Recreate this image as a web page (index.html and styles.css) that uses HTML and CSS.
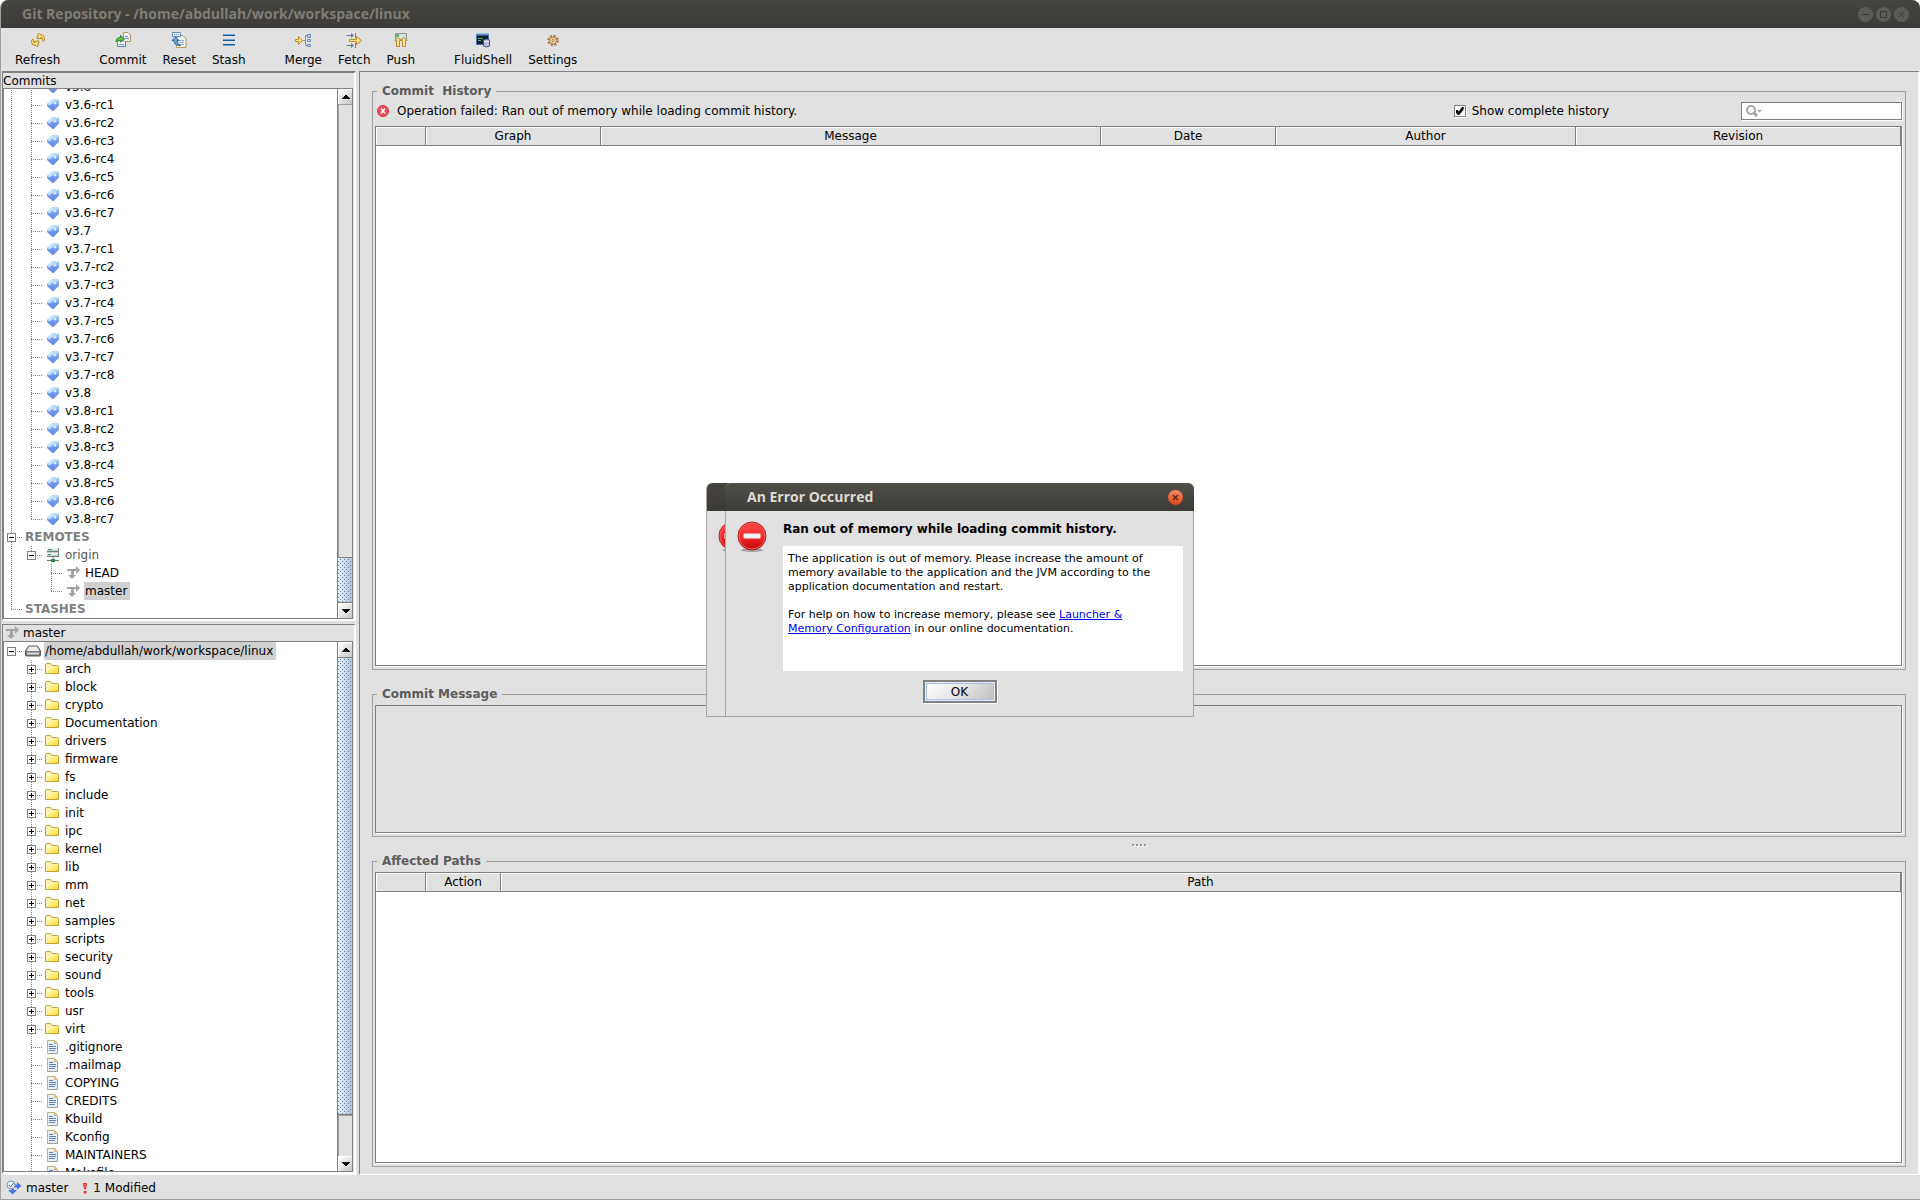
FILE: index.html
```
<!DOCTYPE html>
<html lang="en">
<head>
<meta charset="utf-8">
<title>Git Repository - /home/abdullah/work/workspace/linux</title>
<link rel="stylesheet" href="styles.css">
</head>
<body>
<svg class="defs" aria-hidden="true">
  <defs>
    <linearGradient id="g-tag" x1="0" y1="0" x2="0" y2="1"><stop offset="0" stop-color="#a8d4fa"/><stop offset=".5" stop-color="#7799ee"/><stop offset="1" stop-color="#5b86ea"/></linearGradient>
    <linearGradient id="g-folder" x1="0" y1="0" x2="1" y2="1"><stop offset="0" stop-color="#fffbd0"/><stop offset=".6" stop-color="#ffea6a"/><stop offset="1" stop-color="#fbd42c"/></linearGradient>
    <linearGradient id="g-stop" x1="0" y1="0" x2="0" y2="1"><stop offset="0" stop-color="#ff4a4a"/><stop offset=".55" stop-color="#f02a2a"/><stop offset="1" stop-color="#c00000"/></linearGradient>
    <linearGradient id="g-close" x1="0" y1="0" x2="0" y2="1"><stop offset="0" stop-color="#f58a66"/><stop offset="1" stop-color="#e0451c"/></linearGradient>
    <symbol id="tag" viewBox="0 0 16 16"><path d="M7 2.500 L14 2 V8.500 L8.500 14 H7.500 L2 9 V7 Z" fill="url(#g-tag)"/><path d="M7 2.500 L14 2 V4 H10 L4.500 8.500 L2 7Z" fill="#bfe2fd"/><path d="M8.500 6H11.500M10 4.500V7.500" stroke="#fff"/></symbol>
    <symbol id="folder" viewBox="0 0 16 16"><path d="M.5 12.500 V3.500 Q.5 2.500 1.500 2.500 H5.500 L7 4.500 H12.500 Q13.500 4.500 13.500 5.500 V12.500 Z" fill="#fdf3b4" stroke="#c4a03c"/><path d="M3 5.500 H13 V12 H2 Z" fill="url(#g-folder)"/></symbol>
    <symbol id="file" viewBox="0 0 16 16"><path d="M2.500 1.500 H9.500 L12.500 4.500 V14.500 H2.500Z" fill="#e6effb" stroke="#a5a08a"/><path d="M2.500 14 V1.500 H9.500 L12.500 4.500" fill="none" stroke="#c9b06a"/><path d="M9 2 V5 H12Z" fill="#d6b45c"/><path d="M4 5.500H8M4 7.500H11M4 9.500H11M4 11.500H10" stroke="#5f82bd"/></symbol>
    <symbol id="branch" viewBox="0 0 16 16"><path d="M2 4H11V1L15 5L11 9V6H9V10H11L7 14L3 10H6V6H2Z" fill="#a3a3a3"/></symbol>
    <symbol id="server" viewBox="0 0 16 16"><path d="M2 1H14V10H2Z" fill="#c7cfcf"/><path d="M2 2H14M2 7H14" stroke="#e6eeea" stroke-width="2"/><path d="M2 4.500H14M2 9.500H14M13.500 1V10" stroke="#6d8078"/><path d="M3 2.500H7M3 7.500H6" stroke="#3b9a5a"/><path d="M8 9V12M2 13.500H14" stroke="#6f7775"/><rect x="6" y="12" width="4" height="3" fill="#1f8a44"/></symbol>
    <symbol id="drive" viewBox="0 0 16 16"><path d="M3.500 3H12.500L15.500 8V12Q15.500 13 14.500 13H1.500Q.5 13 .5 12V8Z" fill="#777" stroke="#5c5c5c"/><path d="M4 3.500H12L14.500 8H1.500Z" fill="#ececec"/><path d="M2 10.500H14" stroke="#dcdcdc" stroke-width="2"/></symbol>
    <symbol id="refresh" viewBox="0 0 16 16"><g fill="#fbdc8c" stroke="#c2871a" stroke-linejoin="round"><path d="M7 6.500 L8.500 1 L10 2.500 Q14.500 2 14.500 8 L13 9.500 Q13 6 11 5 L12 6.500 Z"/><path d="M9 9 L7.500 15 L6 13.500 Q1.500 14 1.500 8.500 L3 7 Q3 10 5 11 L4 9.500 Z"/></g></symbol>
    <symbol id="commit" viewBox="0 0 16 16"><path d="M8.500.5H13L15.500 3V9.500H8.500Z" fill="#eef4fc" stroke="#b89a50"/><path d="M10 4.500H13M10 6.500H14" stroke="#6c8fc8"/><path d="M2.500 10.500V14.500H10.500V9.500" fill="#f4f8fd" stroke="#4a80b8"/><path d="M4 12.500H9" stroke="#6c8fc8"/><path d="M1 10Q1 5.500 5.500 5.500V3.500L9.500 7L5.500 10V8.500Q3 8.500 1 10Z" fill="#6cc04c" stroke="#2f8030"/></symbol>
    <symbol id="reset" viewBox="0 0 16 16"><path d="M5.500 3.500H12L15 6.500V15.500H5.500Z" fill="#eef4fc" stroke="#b89a50"/><path d="M8 8.500H13M8 10.500H13M8 12.500H13" stroke="#8aa9d8"/><path d="M1.500.5H9.500V4.500H1.500Z" fill="#fff" stroke="#5a8ac8"/><path d="M3 2.500H8" stroke="#5a8ac8" stroke-dasharray="1 1"/><path d="M4.500 5L8 8.500H6Q6 12 9.500 13.500Q3 14 3 8.500H1Z" fill="#6aa6d8" stroke="#2868a0"/></symbol>
    <symbol id="stash" viewBox="0 0 16 16"><path d="M2 3H14M2 8H14M2 13H14" stroke="#6fa6d2" stroke-width="2"/><path d="M2 3.500H14M2 8.500H14M2 12.500H14" stroke="#175a96"/></symbol>
    <symbol id="merge" viewBox="0 0 16 16"><path d="M.5 7.500H3.500V4.500L7.500 8.500L3.500 12.500V9.500H.5Z" fill="#fde39a" stroke="#c2871a"/><path d="M8 8.500H11M10.500 3.500V13.500M10.500 3.500H12M10.500 13.500H12" stroke="#7890b8" fill="none"/><path d="M12.500 2.500H15.500V5.500H12.500ZM12.500 7.500H15.500V9.500H12.500ZM12.500 12.500H15.500V14.500H12.500Z" fill="#c8d8f2" stroke="#6c88b8"/></symbol>
    <symbol id="fetch" viewBox="0 0 16 16"><path d="M.5 3.500H6M9.500 1V6M.5 13.500H6M9.500 11V16" stroke="#707a84"/><path d="M5 1L8 3.500L5 6ZM5 11L8 13.500L5 16Z" fill="#707a84"/><path d="M3.500 7.500H10.500V4.500L15.500 8.500L10.500 12.500V9.500H3.500Z" fill="#fde39a" stroke="#c2871a"/></symbol>
    <symbol id="push" viewBox="0 0 16 16"><path d="M2.500 1.500H13.500V7.500H2.500Z" fill="#d8dedc" stroke="#8c9490"/><path d="M3 3.500H6" stroke="#39a050" stroke-width="2"/><path d="M5 5.500L8 8.500H6.500V14.500H3.500V8.500H2ZM11 5.500L14 8.500H12.500V14.500H9.500V8.500H8Z" fill="#fde39a" stroke="#b98a28"/></symbol>
    <symbol id="shell" viewBox="0 0 16 16"><path d="M1.500 2.500H13.500V12.500H1.500Z" fill="#0c1c2c" stroke="#3f74b4"/><path d="M1 2.500H14" stroke="#5a92d0" stroke-width="2"/><path d="M3 6.500H8M3 8.500H6" stroke="#4cc060"/><path d="M8.500 8Q11.500 6 14.500 8V14Q11.500 16 8.500 14Z" fill="#b8b8dc" stroke="#50507c"/><path d="M9 9.500H14" stroke="#f0f0fc"/></symbol>
    <symbol id="gear" viewBox="0 0 16 16"><circle cx="8" cy="8.500" r="4.500" fill="none" stroke="#a87a48" stroke-width="2.500" stroke-dasharray="2 1.534"/><circle cx="8" cy="8.500" r="3.500" fill="#f7dca4" stroke="#a87a48"/><circle cx="8" cy="8.500" r="1.200" fill="#e1e1e1" stroke="#a87a48"/></symbol>
    <symbol id="error" viewBox="0 0 12 12"><circle cx="6" cy="6" r="5.500" fill="#ea4c58" stroke="#d8303c"/><path d="M4 3.500L8 8.500M8 3.500L4 8.500" stroke="#fff" stroke-width="1.600"/></symbol>
    <symbol id="stop" viewBox="0 0 32 32"><ellipse cx="15" cy="29" rx="11" ry="2" fill="#a8a8a8"/><circle cx="15" cy="15" r="14" fill="url(#g-stop)" stroke="#b81818"/><circle cx="15" cy="15" r="13" fill="none" stroke="#f46060"/><path d="M6.500 12.500H23.500V17.500H6.500Z" fill="#f4f4f4"/></symbol>
    <symbol id="working" viewBox="0 0 16 16"><path d="M9 4.500H11V2L15.500 6L11 9.500V7.500H8V10H11L6.500 14.500L2 10H5Z" fill="#4a72ee"/><circle cx="5" cy="5" r="4" fill="#eef2fa" stroke="#8296c8"/><path d="M3 5L4.500 7L7.500 3" fill="none" stroke="#5468a8"/></symbol>
    <symbol id="bang" viewBox="0 0 6 12"><path d="M1.500 1.500H4.500L3.500 7H2.500Z" fill="#ff6464" stroke="#e83030"/><rect x="1.500" y="9" width="3" height="2.500" fill="#ee3c3c"/></symbol>
    <symbol id="up" viewBox="0 0 8 4"><path d="M3 0H5V1H6V2H7V3H8V4H0V3H1V2H2V1H3Z"/></symbol>
    <symbol id="down" viewBox="0 0 8 4"><path d="M3 4H5V3H6V2H7V1H8V0H0V1H1V2H2V3H3Z"/></symbol>
  </defs>
</svg>

<div class="window">
  <header class="titlebar">
    <h1>Git Repository - /home/abdullah/work/workspace/linux</h1>
    <div class="window-buttons">
      <button type="button" aria-label="Minimize"><svg viewBox="0 0 15 15"><path d="M4 7.500H11"/></svg></button>
      <button type="button" aria-label="Maximize"><svg viewBox="0 0 15 15"><path d="M4.500 4.500H10.500V10.500H4.500Z"/></svg></button>
      <button type="button" aria-label="Close"><svg viewBox="0 0 15 15"><path d="M5 5L10 10M10 5L5 10"/></svg></button>
    </div>
  </header>

  <nav class="toolbar">
    <div class="tools"><button type="button"><svg><use href="#refresh"/></svg>Refresh</button></div>
    <div class="tools">
      <button type="button"><svg><use href="#commit"/></svg>Commit</button>
      <button type="button"><svg><use href="#reset"/></svg>Reset</button>
      <button type="button"><svg><use href="#stash"/></svg>Stash</button>
    </div>
    <div class="tools">
      <button type="button"><svg><use href="#merge"/></svg>Merge</button>
      <button type="button"><svg><use href="#fetch"/></svg>Fetch</button>
      <button type="button"><svg><use href="#push"/></svg>Push</button>
    </div>
    <div class="tools">
      <button type="button"><svg><use href="#shell"/></svg>FluidShell</button>
      <button type="button"><svg><use href="#gear"/></svg>Settings</button>
    </div>
  </nav>

  <main class="workspace">
    <aside class="sidebar">
      <section class="pane refs">
        <h2 class="pane-title">Commits</h2>
        <div class="scroller">
          <ul class="tree at-end">
            <li>
              <ul>
                <li><div class="row"><svg><use href="#tag"/></svg><span>v3.6</span></div></li>
                <li><div class="row"><svg><use href="#tag"/></svg><span>v3.6-rc1</span></div></li>
                <li><div class="row"><svg><use href="#tag"/></svg><span>v3.6-rc2</span></div></li>
                <li><div class="row"><svg><use href="#tag"/></svg><span>v3.6-rc3</span></div></li>
                <li><div class="row"><svg><use href="#tag"/></svg><span>v3.6-rc4</span></div></li>
                <li><div class="row"><svg><use href="#tag"/></svg><span>v3.6-rc5</span></div></li>
                <li><div class="row"><svg><use href="#tag"/></svg><span>v3.6-rc6</span></div></li>
                <li><div class="row"><svg><use href="#tag"/></svg><span>v3.6-rc7</span></div></li>
                <li><div class="row"><svg><use href="#tag"/></svg><span>v3.7</span></div></li>
                <li><div class="row"><svg><use href="#tag"/></svg><span>v3.7-rc1</span></div></li>
                <li><div class="row"><svg><use href="#tag"/></svg><span>v3.7-rc2</span></div></li>
                <li><div class="row"><svg><use href="#tag"/></svg><span>v3.7-rc3</span></div></li>
                <li><div class="row"><svg><use href="#tag"/></svg><span>v3.7-rc4</span></div></li>
                <li><div class="row"><svg><use href="#tag"/></svg><span>v3.7-rc5</span></div></li>
                <li><div class="row"><svg><use href="#tag"/></svg><span>v3.7-rc6</span></div></li>
                <li><div class="row"><svg><use href="#tag"/></svg><span>v3.7-rc7</span></div></li>
                <li><div class="row"><svg><use href="#tag"/></svg><span>v3.7-rc8</span></div></li>
                <li><div class="row"><svg><use href="#tag"/></svg><span>v3.8</span></div></li>
                <li><div class="row"><svg><use href="#tag"/></svg><span>v3.8-rc1</span></div></li>
                <li><div class="row"><svg><use href="#tag"/></svg><span>v3.8-rc2</span></div></li>
                <li><div class="row"><svg><use href="#tag"/></svg><span>v3.8-rc3</span></div></li>
                <li><div class="row"><svg><use href="#tag"/></svg><span>v3.8-rc4</span></div></li>
                <li><div class="row"><svg><use href="#tag"/></svg><span>v3.8-rc5</span></div></li>
                <li><div class="row"><svg><use href="#tag"/></svg><span>v3.8-rc6</span></div></li>
                <li><div class="row"><svg><use href="#tag"/></svg><span>v3.8-rc7</span></div></li>
              </ul>
            </li>
            <li>
              <div class="row"><button type="button" class="toggle" aria-label="Collapse REMOTES"></button><span class="category">REMOTES</span></div>
              <ul>
                <li>
                  <div class="row"><button type="button" class="toggle" aria-label="Collapse origin"></button><svg><use href="#server"/></svg><span class="remote">origin</span></div>
                  <ul>
                    <li><div class="row"><svg><use href="#branch"/></svg><span>HEAD</span></div></li>
                    <li><div class="row"><svg><use href="#branch"/></svg><span class="selected">master</span></div></li>
                  </ul>
                </li>
              </ul>
            </li>
            <li><div class="row"><span class="category">STASHES</span></div></li>
          </ul>
          <div class="scrollbar" aria-hidden="true">
            <div class="arrow"><svg><use href="#up"/></svg></div>
            <div class="track"></div><div class="thumb"></div>
            <div class="arrow"><svg><use href="#down"/></svg></div>
          </div>
        </div>
      </section>

      <section class="pane files">
        <h2 class="pane-title"><svg><use href="#branch"/></svg>master</h2>
        <div class="scroller">
          <ul class="tree">
            <li class="root">
              <div class="row"><button type="button" class="toggle" aria-label="Collapse linux"></button><svg><use href="#drive"/></svg><span class="selected">/home/abdullah/work/workspace/linux</span></div>
              <ul>
                <li><div class="row"><button type="button" class="toggle closed" aria-label="Expand arch"></button><svg><use href="#folder"/></svg><span>arch</span></div></li>
                <li><div class="row"><button type="button" class="toggle closed" aria-label="Expand block"></button><svg><use href="#folder"/></svg><span>block</span></div></li>
                <li><div class="row"><button type="button" class="toggle closed" aria-label="Expand crypto"></button><svg><use href="#folder"/></svg><span>crypto</span></div></li>
                <li><div class="row"><button type="button" class="toggle closed" aria-label="Expand Documentation"></button><svg><use href="#folder"/></svg><span>Documentation</span></div></li>
                <li><div class="row"><button type="button" class="toggle closed" aria-label="Expand drivers"></button><svg><use href="#folder"/></svg><span>drivers</span></div></li>
                <li><div class="row"><button type="button" class="toggle closed" aria-label="Expand firmware"></button><svg><use href="#folder"/></svg><span>firmware</span></div></li>
                <li><div class="row"><button type="button" class="toggle closed" aria-label="Expand fs"></button><svg><use href="#folder"/></svg><span>fs</span></div></li>
                <li><div class="row"><button type="button" class="toggle closed" aria-label="Expand include"></button><svg><use href="#folder"/></svg><span>include</span></div></li>
                <li><div class="row"><button type="button" class="toggle closed" aria-label="Expand init"></button><svg><use href="#folder"/></svg><span>init</span></div></li>
                <li><div class="row"><button type="button" class="toggle closed" aria-label="Expand ipc"></button><svg><use href="#folder"/></svg><span>ipc</span></div></li>
                <li><div class="row"><button type="button" class="toggle closed" aria-label="Expand kernel"></button><svg><use href="#folder"/></svg><span>kernel</span></div></li>
                <li><div class="row"><button type="button" class="toggle closed" aria-label="Expand lib"></button><svg><use href="#folder"/></svg><span>lib</span></div></li>
                <li><div class="row"><button type="button" class="toggle closed" aria-label="Expand mm"></button><svg><use href="#folder"/></svg><span>mm</span></div></li>
                <li><div class="row"><button type="button" class="toggle closed" aria-label="Expand net"></button><svg><use href="#folder"/></svg><span>net</span></div></li>
                <li><div class="row"><button type="button" class="toggle closed" aria-label="Expand samples"></button><svg><use href="#folder"/></svg><span>samples</span></div></li>
                <li><div class="row"><button type="button" class="toggle closed" aria-label="Expand scripts"></button><svg><use href="#folder"/></svg><span>scripts</span></div></li>
                <li><div class="row"><button type="button" class="toggle closed" aria-label="Expand security"></button><svg><use href="#folder"/></svg><span>security</span></div></li>
                <li><div class="row"><button type="button" class="toggle closed" aria-label="Expand sound"></button><svg><use href="#folder"/></svg><span>sound</span></div></li>
                <li><div class="row"><button type="button" class="toggle closed" aria-label="Expand tools"></button><svg><use href="#folder"/></svg><span>tools</span></div></li>
                <li><div class="row"><button type="button" class="toggle closed" aria-label="Expand usr"></button><svg><use href="#folder"/></svg><span>usr</span></div></li>
                <li><div class="row"><button type="button" class="toggle closed" aria-label="Expand virt"></button><svg><use href="#folder"/></svg><span>virt</span></div></li>
                <li><div class="row"><svg><use href="#file"/></svg><span>.gitignore</span></div></li>
                <li><div class="row"><svg><use href="#file"/></svg><span>.mailmap</span></div></li>
                <li><div class="row"><svg><use href="#file"/></svg><span>COPYING</span></div></li>
                <li><div class="row"><svg><use href="#file"/></svg><span>CREDITS</span></div></li>
                <li><div class="row"><svg><use href="#file"/></svg><span>Kbuild</span></div></li>
                <li><div class="row"><svg><use href="#file"/></svg><span>Kconfig</span></div></li>
                <li><div class="row"><svg><use href="#file"/></svg><span>MAINTAINERS</span></div></li>
                <li><div class="row"><svg><use href="#file"/></svg><span>Makefile</span></div></li>
              </ul>
            </li>
          </ul>
          <div class="scrollbar" aria-hidden="true">
            <div class="arrow"><svg><use href="#up"/></svg></div>
            <div class="thumb"></div><div class="track"></div>
            <div class="arrow"><svg><use href="#down"/></svg></div>
          </div>
        </div>
      </section>
    </aside>

    <div class="details">
      <fieldset class="group history">
        <legend>Commit  History</legend>
        <div class="history-bar">
          <svg class="error-icon"><use href="#error"/></svg>
          <p>Operation failed: Ran out of memory while loading commit history.</p>
          <label class="check"><input type="checkbox" checked>Show complete history</label>
          <div class="search">
            <svg viewBox="0 0 18 14" aria-hidden="true"><circle cx="6" cy="6" r="4" fill="none" stroke="#a6a6a6" stroke-width="2"/><path d="M9 9L12 12" stroke="#a6a6a6" stroke-width="3"/><path d="M12 6H17L14.500 8.500Z" fill="#a6a6a6"/></svg>
            <input type="text" aria-label="Search commits">
          </div>
        </div>
        <div class="well sheet">
          <table>
            <colgroup><col class="w-mark"><col class="w-narrow"><col class="w-message"><col class="w-narrow"><col class="w-author"><col></colgroup>
            <thead><tr><th></th><th>Graph</th><th>Message</th><th>Date</th><th>Author</th><th>Revision</th></tr></thead>
          </table>
        </div>
      </fieldset>
      <fieldset class="group message">
        <legend>Commit Message</legend>
        <div class="well"></div>
      </fieldset>
      <div class="splitter" aria-hidden="true"><i></i><i></i><i></i><i></i></div>
      <fieldset class="group paths">
        <legend>Affected Paths</legend>
        <div class="well sheet">
          <table>
            <colgroup><col class="w-mark"><col class="w-action"><col></colgroup>
            <thead><tr><th></th><th>Action</th><th>Path</th></tr></thead>
          </table>
        </div>
      </fieldset>
    </div>
  </main>

  <footer class="statusbar">
    <svg class="ref-icon"><use href="#working"/></svg><span>master</span>
    <svg class="bang-icon"><use href="#bang"/></svg><span>1 Modified</span>
  </footer>
</div>

<div class="overlay">
  <div class="dialog-stack">
    <div class="dialog behind" aria-hidden="true">
      <div class="dialog-title"></div>
      <div class="dialog-body"><svg class="stop-icon"><use href="#stop"/></svg></div>
    </div>
    <div class="dialog" role="alertdialog" aria-labelledby="dialog-title">
      <div class="dialog-title">
        <h2 id="dialog-title">An Error Occurred</h2>
        <button type="button" aria-label="Close"><svg viewBox="0 0 15 15"><circle cx="7.500" cy="7.500" r="7.500" fill="url(#g-close)"/><path d="M5 5L10 10M10 5L5 10" stroke="#5a2a18" stroke-width="1.500"/></svg></button>
      </div>
      <div class="dialog-body">
        <svg class="stop-icon"><use href="#stop"/></svg>
        <div class="dialog-text">
          <h3>Ran out of memory while loading commit history.</h3>
          <div class="explanation">
            <p>The application is out of memory. Please increase the amount of memory available to the application and the JVM according to the application documentation and restart.</p>
            <p>For help on how to increase memory, please see <a href="#">Launcher &amp; Memory Configuration</a> in our online documentation.</p>
          </div>
        </div>
      </div>
      <div class="dialog-actions"><button type="button">OK</button></div>
    </div>
  </div>
</div>
</body>
</html>
```
FILE: styles.css
```
:root {
  --face: #e1e1e1;
  --line: #808080;
  --soft-line: #a0a0a0;
  --ink: #000;
}

* { box-sizing: border-box; }

body {
  margin: 0;
  background: #fff;
  color: var(--ink);
  font: 12px/16px "DejaVu Sans", sans-serif;
}

h1, h2, h3, p, ul { margin: 0; padding: 0; font-size: inherit; font-weight: normal; }
ul { list-style: none; }
svg { display: block; flex: none; width: 16px; height: 16px; }
button { margin: 0; padding: 0; border: 0; background: none; color: inherit; font: inherit; }
.defs { position: absolute; width: 0; height: 0; }

.window {
  display: flex;
  flex-direction: column;
  height: 100vh;
  background: var(--face);
  border: solid var(--soft-line);
  border-width: 0 0 1px 1px;
  border-radius: 8px 8px 0 0;
  overflow: hidden;
}

/* Title bar */
.titlebar {
  display: flex;
  align-items: center;
  justify-content: space-between;
  flex: none;
  height: 28px;
  margin-left: -1px;
  padding: 0 11px 0 22px;
  background: linear-gradient(#45443f, #3c3b37);
  color: #807d75;
}
.titlebar h1, .dialog-title h2 { font: bold 14px/18px "Open Sans", sans-serif; }
.window-buttons { display: flex; gap: 3px; }
.window-buttons svg { width: 15px; height: 15px; border-radius: 50%; background: #5c5b55; fill: none; stroke: #3a3935; }

/* Toolbar */
.toolbar { display: flex; flex: none; gap: 39px; height: 43px; padding: 4px 14px 0; }
.tools { display: flex; gap: 16px; }
.tools button { display: flex; flex-direction: column; align-items: center; gap: 4px; height: 36px; }

/* Main split */
.workspace { display: flex; flex: 1; min-height: 0; gap: 3px; padding-left: 1px; }
.sidebar { display: flex; flex-direction: column; flex: none; gap: 3px; width: 354px; }

.pane {
  display: flex;
  flex-direction: column;
  min-height: 0;
  border: solid;
  border-color: var(--line) #fff #fff var(--line);
}
.refs { flex: 550 1 0; border-width: 2px 2px 2px 1px; }
.files { flex: 552 1 0; border-width: 1px 2px 3px 1px; }
.pane-title { display: flex; align-items: center; flex: none; gap: 3px; height: 16px; }
.refs .pane-title { height: 15px; }
.files .pane-title svg { margin-left: 1px; }
.scroller {
  display: flex;
  flex: 1;
  min-height: 0;
  margin-right: 1px;
  border: 1px solid var(--line);
  background: #fff;
}

/* Trees: dotted guides are painted as backgrounds of items and rows */
.tree { flex: 1; min-width: 0; overflow: hidden; }
.tree.at-end { display: flex; flex-direction: column; justify-content: flex-end; }
.tree ul { padding-left: 20px; }
.tree li {
  flex: none;
  background: repeating-linear-gradient(var(--line) 0 1px, transparent 1px 2px) 7px 0 / 1px 100% no-repeat;
}
.tree li:last-child { background-size: 1px 10px; }
.tree .root { background: none; }
.row {
  display: flex;
  align-items: center;
  height: 18px;
  padding-left: 21px;
  background: repeating-linear-gradient(90deg, var(--line) 0 1px, transparent 1px 2px) 7px 9px / 12px 1px no-repeat;
}
.row:has(.toggle) { padding-left: 3px; }
.row svg { margin-right: 3px; }
.row span { height: 18px; padding: 0 3px 0 1px; line-height: 18px; }
.row .selected { background: #d0d0d0; }
.row .category { padding-left: 0; color: var(--line); font-weight: bold; }
.row .remote { color: #555; }
.toggle {
  flex: none;
  width: 9px;
  height: 9px;
  margin: 1px 9px 0 0;
  border: 1px solid var(--line);
  background: linear-gradient(#000, #000) center / 5px 1px no-repeat, #fff;
}
.toggle.closed {
  background: linear-gradient(#000, #000) center / 5px 1px no-repeat, linear-gradient(#000, #000) center / 1px 5px no-repeat, #fff;
}

/* Scroll bars */
.scrollbar { display: flex; flex-direction: column; flex: none; width: 14px; background: var(--face); box-shadow: -1px 0 var(--line); }
.arrow {
  display: grid;
  place-items: center;
  flex: none;
  height: 15px;
  border: solid #fff;
  border-width: 1px 0 0 1px;
  background: linear-gradient(135deg, #fff, #c6c6c6);
}
.arrow svg { width: 8px; height: 4px; }
.track { flex: 454 1 0; border: solid var(--soft-line); border-width: 1px 0 0 1px; }
.thumb {
  flex: 44 1 0;
  border: solid var(--line);
  border-width: 1px 0;
  background:
    conic-gradient(from 270deg at 1px 1px, #60789a 25%, transparent 0) 2px 1px / 4px 4px,
    conic-gradient(from 270deg at 1px 1px, #60789a 25%, transparent 0) 4px 3px / 4px 4px,
    linear-gradient(90deg, #eaf3fc, #b4c6dc);
}
.files .thumb { flex-grow: 458; }
.files .track { flex-grow: 40; }

/* Right side */
.details {
  display: grid;
  flex: 1;
  grid-template-rows: minmax(0, 588fr) 16px minmax(0, 151fr) 16px minmax(0, 314fr);
  grid-template-columns: minmax(0, 1fr);
  min-width: 0;
  padding: 11px 12px 7px;
  border: solid;
  border-width: 1px 2px 1px 1px;
  border-color: var(--line) #fff #fff var(--line);
}
.group {
  display: flex;
  flex-direction: column;
  min-width: 0;
  min-height: 0;
  margin: 0;
  padding: 0 3px 3px 2px;
  border: 1px solid var(--soft-line);
}
.history { grid-row: 1; }
.message { grid-row: 3; }
.paths { grid-row: 5; }
.group legend { height: 16px; margin-left: 2px; padding: 0 5px; color: #5c5c5c; font-weight: bold; white-space: pre; }
.splitter { display: flex; justify-content: center; gap: 2px; grid-row: 4; padding-top: 7px; }
.splitter i { width: 2px; height: 2px; background: #999; box-shadow: 1px 1px #fff; }

.history-bar { display: flex; align-items: center; flex: none; height: 18px; margin: 3px 0; padding-left: 2px; }
.error-icon { width: 12px; height: 12px; margin-right: 8px; }
.history-bar p { flex: 1; }
.check { display: flex; align-items: center; gap: 6px; margin-right: 132px; }
.check input {
  appearance: none;
  width: 12px;
  height: 12px;
  margin: 0;
  border: 1px solid var(--line);
  background: #fff;
  box-shadow: 1px 1px #fff;
}
.check input:checked::before {
  content: "";
  display: block;
  width: 8px;
  height: 8px;
  margin: 1px;
  background: #000;
  clip-path: polygon(0 38%, 25% 38%, 38% 55%, 80% 0, 100% 0, 100% 30%, 45% 100%, 25% 100%, 0 65%);
}
.search {
  display: flex;
  align-items: center;
  width: 161px;
  height: 18px;
  padding-left: 3px;
  border: 1px solid var(--line);
  background: #fff;
  box-shadow: 1px 1px #fff;
}
.search svg { width: 18px; height: 14px; }
.search input { flex: 1; min-width: 0; height: 14px; padding: 0; border: 0; outline: 0; background: none; font: inherit; }

.well { flex: 1; min-height: 0; margin-top: 3px; border: 1px solid var(--line); box-shadow: 1px 1px #fff; }
.sheet { background: #fff; }
table { width: 100%; border-collapse: separate; border-spacing: 0; table-layout: fixed; }
th {
  height: 19px;
  padding: 0;
  border: solid var(--line);
  border-width: 0 1px 1px 0;
  background: var(--face);
  box-shadow: inset 1px 1px #fff;
  font-weight: normal;
}
.w-mark { width: 50px; }
.w-narrow { width: 175px; }
.w-message { width: 500px; }
.w-author { width: 300px; }
.w-action { width: 75px; }

/* Status bar */
.statusbar { display: flex; align-items: center; flex: none; height: 24px; padding: 2px 0 0 5px; }
.ref-icon { margin-right: 4px; }
.bang-icon { width: 6px; height: 12px; margin: 0 5px 0 14px; }

/* Error dialogs, floating over the window */
.overlay { position: fixed; inset: 0; display: grid; place-items: center; padding-right: 1px; }
.dialog-stack { position: relative; width: 469px; }
.dialog {
  position: relative;
  min-height: 234px;
  border: solid #aaa69d;
  border-width: 0 1px 1px;
  border-radius: 6px 6px 0 0;
  background: var(--face);
}
.behind { position: absolute; top: 0; left: -19px; width: 100%; overflow: hidden; }
.dialog-title {
  display: flex;
  align-items: center;
  justify-content: space-between;
  height: 28px;
  margin: 0 -1px;
  padding: 0 11px 0 22px;
  border-radius: 6px 6px 0 0;
  background: linear-gradient(#504f49, #3c3b37);
  color: #dfdbd2;
}
.behind .dialog-title { background: linear-gradient(#45443f, #3c3b37); }
.dialog-title svg { width: 15px; height: 15px; }
.dialog-body { display: flex; gap: 14px; padding: 10px 10px 0 11px; }
.stop-icon { width: 32px; height: 32px; }
.dialog-text { flex: 1; }
.dialog-text h3 { margin-bottom: 9px; font-weight: bold; }
.explanation { height: 125px; padding: 6px 20px 5px 5px; background: #fff; font-size: 11px; line-height: 14px; }
.explanation p + p { margin-top: 14px; }
.explanation a { color: #00f; }
.dialog-actions { display: flex; justify-content: center; padding: 9px 0 13px; }
.dialog-actions button {
  width: 74px;
  height: 23px;
  border: 2px solid var(--line);
  background: linear-gradient(135deg, #fff, #e4e4e4 50%, #bcbcbc);
  box-shadow: inset 0 0 0 1px #e8eef6, inset 0 0 0 2px #a4c4ec, 1px 1px #fff;
}
```
